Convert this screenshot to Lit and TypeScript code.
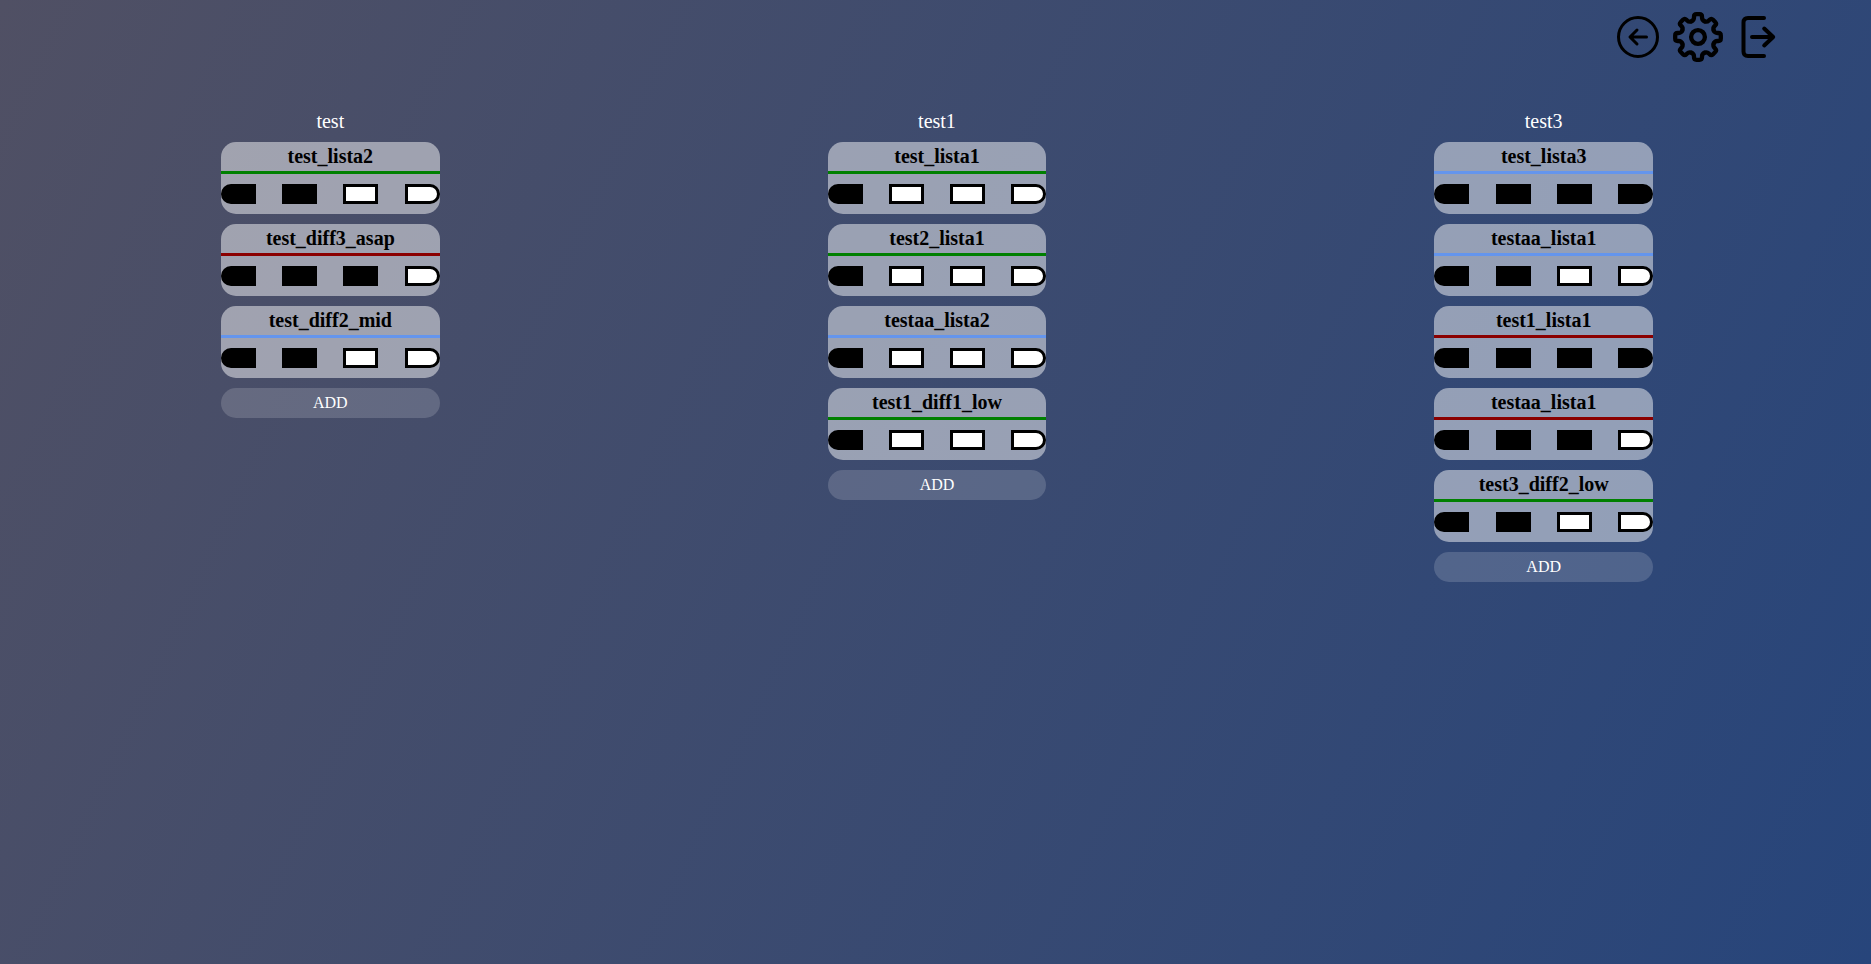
import { LitElement, html, svg, css } from "lit";
import { customElement, property } from "lit/decorators.js";
import { classMap } from "lit/directives/class-map.js";

type Priority = "low" | "mid" | "asap";

interface Task {
  name: string;
  priority: Priority;
  difficulty: number;
}

interface Column {
  title: string;
  tasks: Task[];
}

const COLUMNS: Column[] = [
  {
    title: "test",
    tasks: [
      { name: "test_lista2", priority: "low", difficulty: 2 },
      { name: "test_diff3_asap", priority: "asap", difficulty: 3 },
      { name: "test_diff2_mid", priority: "mid", difficulty: 2 },
    ],
  },
  {
    title: "test1",
    tasks: [
      { name: "test_lista1", priority: "low", difficulty: 1 },
      { name: "test2_lista1", priority: "low", difficulty: 1 },
      { name: "testaa_lista2", priority: "mid", difficulty: 1 },
      { name: "test1_diff1_low", priority: "low", difficulty: 1 },
    ],
  },
  {
    title: "test3",
    tasks: [
      { name: "test_lista3", priority: "mid", difficulty: 4 },
      { name: "testaa_lista1", priority: "mid", difficulty: 2 },
      { name: "test1_lista1", priority: "asap", difficulty: 4 },
      { name: "testaa_lista1", priority: "asap", difficulty: 3 },
      { name: "test3_diff2_low", priority: "low", difficulty: 2 },
    ],
  },
];

// One tooth of the gear, repeated around the centre of the icon.
const TOOTH =
  "M-6.5 -15.7C-4.9 -16.4 -4 -17.8 -4 -19.400V-20.3Q-4 -22.8 -1.5 -22.8H1.5Q4 -22.8 4 -20.3V-19.400C4 -17.8 4.9 -16.4 6.5 -15.7";
const TOOTH_ANGLES = [0, 45, 90, 135, 180, 225, 270, 315];

@customElement("task-card")
export class TaskCard extends LitElement {
  @property({ attribute: false }) task!: Task;

  static styles = css`
    :host {
      display: block;
    }
    .card {
      background: rgba(255, 255, 255, 0.48);
      border-radius: 15px;
      overflow: hidden;
      color: #000;
    }
    .name {
      margin: 0;
      font-size: 20px;
      font-weight: bold;
      line-height: 29px;
      text-align: center;
      border-bottom: 3px solid;
    }
    .low {
      border-color: green;
    }
    .mid {
      border-color: cornflowerblue;
    }
    .asap {
      border-color: darkred;
    }
    .levels {
      display: flex;
      justify-content: space-between;
      padding: 10px 0;
    }
    .level {
      box-sizing: border-box;
      width: 35px;
      height: 20px;
      border: 3px solid #000;
      background: #fff;
    }
    .level.filled {
      background: #000;
    }
    .level:first-child {
      border-radius: 10px 0 0 10px;
    }
    .level:last-child {
      border-radius: 0 10px 10px 0;
    }
  `;

  render() {
    const { name, priority, difficulty } = this.task;
    return html`
      <article class="card">
        <h3 class="name ${priority}">${name}</h3>
        <div class="levels">
          ${[1, 2, 3, 4].map(
            (n) => html`<span class=${classMap({ level: true, filled: n <= difficulty })}></span>`
          )}
        </div>
      </article>
    `;
  }
}

@customElement("app-root")
export class AppRoot extends LitElement {
  static styles = css`
    :host {
      display: block;
      min-height: 100vh;
      background: linear-gradient(115deg, #505064, #27457b);
      font-family: "Liberation Serif", "Times New Roman", serif;
      color: #fff;
    }
    .toolbar {
      display: flex;
      justify-content: flex-end;
      gap: 10px;
      padding: 12px 88px 0 0;
    }
    .tool {
      display: block;
      width: 50px;
      height: 50px;
      padding: 0;
      border: 0;
      background: none;
      color: #000;
      cursor: pointer;
    }
    .icon {
      display: block;
      width: 100%;
      height: 100%;
      fill: none;
      stroke: currentColor;
      stroke-linecap: round;
      stroke-linejoin: round;
    }
    .board {
      display: grid;
      grid-template-columns: repeat(3, 1fr);
      align-items: start;
      padding: 48px 24px 0 27px;
    }
    .column {
      display: flex;
      flex-direction: column;
      gap: 10px;
      width: 36%;
      justify-self: center;
    }
    .title {
      margin: 0;
      font-size: 20px;
      font-weight: normal;
      line-height: 22px;
      text-align: center;
    }
    .add {
      height: 30px;
      padding: 0;
      border: 0;
      border-radius: 15px;
      background: rgba(255, 255, 255, 0.16);
      color: #fff;
      font-family: inherit;
      font-size: 16px;
      cursor: pointer;
    }
  `;

  render() {
    return html`
      <header class="toolbar">
        <button class="tool" aria-label="Back">
          <svg class="icon" viewBox="0 0 50 50" stroke-width="3">
            <circle cx="25" cy="25" r="19.5" />
            <path d="M33.5 25H17.5M24 18l-7 7 7 7" />
          </svg>
        </button>
        <button class="tool" aria-label="Settings">
          <svg class="icon" viewBox="-25 -25 50 50" stroke-width="4.3">
            <circle r="6.9" />
            ${TOOTH_ANGLES.map((angle) => svg`<path d=${TOOTH} transform="rotate(${angle})" />`)}
          </svg>
        </button>
        <button class="tool" aria-label="Log out">
          <svg class="icon" viewBox="0 0 50 50" stroke-width="4">
            <path d="M31 6H15q-4.500 0-4.500 4.500v29q0 4.500 4.500 4.500h16" />
            <path d="M19 25h21M31.200 16.500l9 8.500-9 8.500" />
          </svg>
        </button>
      </header>
      <main class="board">
        ${COLUMNS.map(
          (column) => html`
            <section class="column">
              <h2 class="title">${column.title}</h2>
              ${column.tasks.map((task) => html`<task-card .task=${task}></task-card>`)}
              <button class="add">ADD</button>
            </section>
          `
        )}
      </main>
    `;
  }
}
